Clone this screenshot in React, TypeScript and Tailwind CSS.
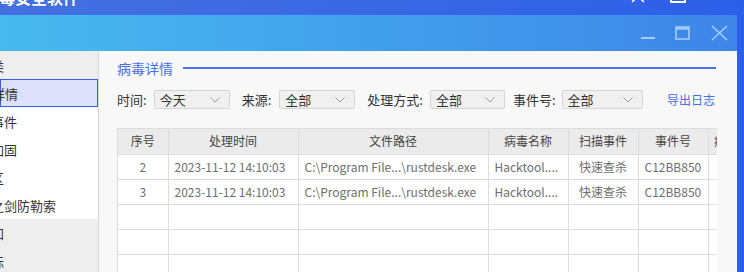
const FONT = "font-['Noto_Sans_CJK_SC','Noto_Sans',sans-serif]";

type SideItem = { label: string; kind: "header" | "item" | "active" };

const SIDE: SideItem[] = [
  { label: "日志分类", kind: "header" },
  { label: "病毒详情", kind: "active" },
  { label: "隔离事件", kind: "item" },
  { label: "系统加固", kind: "item" },
  { label: "隔离区", kind: "item" },
  { label: "雷霆之剑防勒索", kind: "item" },
  { label: "消息通知", kind: "header" },
  { label: "托盘图标", kind: "header" },
];

const COLS = [
  { title: "序号", w: 50, align: "center" },
  { title: "处理时间", w: 130, align: "left" },
  { title: "文件路径", w: 190, align: "left" },
  { title: "病毒名称", w: 80, align: "left" },
  { title: "扫描事件", w: 70, align: "center" },
  { title: "事件号", w: 70, align: "left" },
  { title: "病毒类型", w: 60, align: "left" },
];

const ROWS = [
  ["2", "2023-11-12 14:10:03", "C:\\Program File...\\rustdesk.exe", "Hacktool....", "快速查杀", "C12BB850", ""],
  ["3", "2023-11-12 14:10:03", "C:\\Program File...\\rustdesk.exe", "Hacktool....", "快速查杀", "C12BB850", ""],
  ["", "", "", "", "", "", ""],
  ["", "", "", "", "", "", ""],
  ["", "", "", "", "", "", ""],
];

function Select({ value, width }: { value: string; width: string }) {
  return (
    <div
      className={`${width} h-[19px] flex items-center justify-between pl-[5px] pr-[9px] bg-[#f0f0f0] border border-[#d4d4d4] rounded-[2px] text-[13px] text-[#333]`}
    >
      <span className="leading-none">{value}</span>
      <svg width="10" height="6" viewBox="0 0 10 6">
        <path d="M0.5 0.5 L5 5 L9.5 0.5" fill="none" stroke="#9a9a9a" strokeWidth="1" />
      </svg>
    </div>
  );
}

function Sidebar() {
  return (
    <div className="w-[99px] shrink-0 flex flex-col border-r border-[#d6d6d6] bg-white overflow-hidden text-[13px] text-[#333]">
      {SIDE.map((s) => {
        const box =
          s.kind === "header"
            ? "bg-[#eeeeee]"
            : s.kind === "active"
              ? "bg-[#dde1fc] border border-[#3d5ce0]"
              : "bg-white";
        const shift = s.kind === "header" ? "-ml-[48px]" : "-ml-[35px]";
        return (
          <div key={s.label} className={`h-[28px] shrink-0 flex items-center ${box}`}>
            <span className={`${shift} whitespace-nowrap leading-none`}>{s.label}</span>
          </div>
        );
      })}
    </div>
  );
}

function DetailTable() {
  return (
    <div className="mt-[19px] w-[600px] overflow-hidden border-l border-t border-[#dcdcdc]">
      <table className="table-fixed border-collapse w-[650px] text-[12px]">
        <colgroup>
          {COLS.map((c) => (
            <col key={c.title} style={{ width: c.w }} />
          ))}
        </colgroup>
        <thead>
          <tr className="h-[25px] bg-[#ebebeb]">
            {COLS.map((c) => (
              <th
                key={c.title}
                className="border-r border-b border-[#dcdcdc] font-normal text-[#444] text-center whitespace-nowrap overflow-hidden"
              >
                {c.title}
              </th>
            ))}
          </tr>
        </thead>
        <tbody>
          {ROWS.map((r, i) => (
            <tr key={i} className="h-[25px] bg-white">
              {r.map((v, j) => (
                <td
                  key={j}
                  className={`border-r border-b border-[#dcdcdc] text-[#6e6e6e] whitespace-nowrap overflow-hidden ${
                    COLS[j].align === "center" ? "text-center" : "text-left pl-[6px]"
                  }`}
                >
                  {v}
                </td>
              ))}
            </tr>
          ))}
        </tbody>
      </table>
    </div>
  );
}

export default function App() {
  return (
    <div
      className={`w-[744px] h-[272px] overflow-hidden flex flex-col bg-gradient-to-r from-[#4670e0] to-[#2c5fe8] ${FONT}`}
    >
      {/* outer window title bar (mostly off screen) */}
      <div className="h-[15px] shrink-0 flex overflow-hidden">
        <span className="-mt-[11px] -ml-[17px] text-[16px] leading-[16px] font-bold text-white whitespace-nowrap">
          病毒安全软件
        </span>
        <svg className="ml-auto -mt-[9px]" width="16" height="12" viewBox="0 0 16 12">
          <path d="M2 0 L14 11 M14 0 L2 11" stroke="white" strokeWidth="1.6" />
        </svg>
        <svg className="ml-[24px] mr-[58px] -mt-[10px]" width="16" height="13" viewBox="0 0 16 13">
          <rect x="1" y="1" width="14" height="11" fill="none" stroke="white" strokeWidth="2" />
        </svg>
      </div>

      <div className="flex-1 min-h-0 flex pr-[7px]">
        <div className="flex-1 flex flex-col min-w-0">
          {/* inner dialog title bar */}
          <div className="h-[36px] shrink-0 flex items-center justify-end pr-[9px] bg-gradient-to-r from-[#48baee] to-[#3e85e8]">
            <svg width="14" height="14" viewBox="0 0 14 14" className="mt-[2px]">
              <path d="M0 11 H14" stroke="#a7cbf6" strokeWidth="2" />
            </svg>
            <svg width="15" height="14" viewBox="0 0 15 14" className="ml-[20px]">
              <rect x="1" y="1" width="13" height="12" fill="none" stroke="#a7cbf6" strokeWidth="1.6" />
              <path d="M1 2.5 H14" stroke="#a7cbf6" strokeWidth="2.4" />
            </svg>
            <svg width="17" height="16" viewBox="0 0 17 16" className="ml-[21px]">
              <path d="M1 1 L16 15 M16 1 L1 15" stroke="#a7cbf6" strokeWidth="1.6" />
            </svg>
          </div>

          <div className="flex-1 min-h-0 flex">
            <Sidebar />
            <div className="flex-1 min-w-0 bg-[#f8f8f8] pl-[18px] pr-[21px] pt-[6px]">
              <div className="h-[21px] flex items-center">
                <span className="text-[14px] leading-none text-[#4a6ee8]">病毒详情</span>
                <div className="flex-1 ml-[10px] h-[2px] bg-[#4f72ef]" />
              </div>

              <div className="mt-[12px] h-[19px] flex items-center text-[13px] text-[#333]">
                <span>时间:</span>
                <div className="ml-[7px]">
                  <Select value="今天" width="w-[76px]" />
                </div>
                <span className="ml-[12px]">来源:</span>
                <div className="ml-[8px]">
                  <Select value="全部" width="w-[76px]" />
                </div>
                <span className="ml-[12px]">处理方式:</span>
                <div className="ml-[7px]">
                  <Select value="全部" width="w-[75px]" />
                </div>
                <span className="ml-[8px]">事件号:</span>
                <div className="ml-[6px]">
                  <Select value="全部" width="w-[81px]" />
                </div>
                <span className="ml-auto mr-[1px] text-[12px] text-[#4a6ee8]">导出日志</span>
              </div>

              <DetailTable />
            </div>
          </div>
        </div>
      </div>
    </div>
  );
}
